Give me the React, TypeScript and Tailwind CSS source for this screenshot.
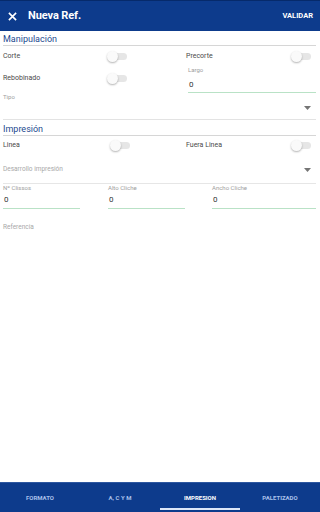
import React from "react";

function Toggle() {
  return (
    <div className="relative w-[20px] h-[12px] flex items-center">
      <div className="absolute right-0 w-[16px] h-[7px] rounded-full bg-[#e6e6e6]" />
      <div className="absolute left-0 w-[11px] h-[11px] rounded-full bg-[#fafafa] shadow-[0_1px_2px_rgba(0,0,0,0.3)]" />
    </div>
  );
}

function Arrow() {
  return (
    <svg width="7" height="4" viewBox="0 0 7 4">
      <path d="M0 0 L7 0 L3.5 4 Z" fill="#757575" />
    </svg>
  );
}

function Field({ label, w, v, u }: { label: string; w: string; v: string; u: string }) {
  return (
    <div className={`flex flex-col ${w}`}>
      <div className="text-[6px] leading-[8px] text-[#9e9e9e] h-[8px]">{label}</div>
      <div className={`text-[8px] leading-[10px] text-[#333] pl-[1px] ${v}`}>0</div>
      <div className={`h-px bg-[#b9e2c6] ${u}`} />
    </div>
  );
}

export default function App() {
  return (
    <div
      className="w-[320px] h-[512px] bg-white flex flex-col overflow-hidden"
      style={{ fontFamily: "Roboto, 'Liberation Sans', sans-serif" }}
    >
      {/* header */}
      <div className="h-[31px] bg-[#0d3b8c] border-t border-[#062a6b] flex items-center px-[7px] shrink-0">
        <svg width="9" height="9" viewBox="0 0 10 10" className="ml-[1px]">
          <path d="M1 1 L9 9 M9 1 L1 9" stroke="white" strokeWidth="1.8" />
        </svg>
        <span className="ml-[11px] text-white font-bold text-[11px] tracking-[-0.1px]">Nueva Ref.</span>
        <span className="ml-auto text-white font-bold text-[7.5px]">VALIDAR</span>
      </div>

      <div className="flex-1 flex flex-col px-[3px]">
        {/* Manipulación */}
        <div className="mt-[2px] text-[9px] leading-[12px] text-[#1d4a8f]">Manipulación</div>
        <div className="h-px bg-[#d6d6d6] mr-[1px]" />

        <div className="grid grid-cols-[183px_1fr]">
          <div className="h-[20px] flex items-center">
            <span className="text-[7px] text-[#4a4a4a] w-[104px]">Corte</span>
            <Toggle />
          </div>
          <div className="h-[20px] flex items-center">
            <span className="text-[7px] text-[#4a4a4a] w-[104px]">Precorte</span>
            <span className="ml-auto mr-[6px]"><Toggle /></span>
          </div>
          <div className="h-[24px] flex items-center">
            <span className="text-[7px] text-[#4a4a4a] w-[104px]">Rebobinado</span>
            <Toggle />
          </div>
          <div className="pl-[2px] mr-[1px]">
            <Field label="Largo" w="w-full" v="mt-[6px]" u="mt-[2px]" />
          </div>
        </div>

        {/* Tipo */}
        <div className="text-[6px] leading-[8px] text-[#9e9e9e]">Tipo</div>
        <div className="h-[12px] flex items-center justify-end pr-[6px] mt-[1px]">
          <Arrow />
        </div>
        <div className="h-px bg-[#e3e3e3] mt-[5px] mr-[1px]" />

        {/* Impresión */}
        <div className="mt-[3px] text-[9px] leading-[12px] text-[#1d4a8f]">Impresión</div>
        <div className="h-px bg-[#d6d6d6] mr-[1px]" />

        <div className="grid grid-cols-[183px_1fr]">
          <div className="h-[18px] flex items-center">
            <span className="text-[7px] text-[#4a4a4a] w-[107px]">Linea</span>
            <Toggle />
          </div>
          <div className="h-[18px] flex items-center">
            <span className="text-[7px] text-[#4a4a4a] w-[104px]">Fuera Linea</span>
            <span className="ml-auto mr-[6px]"><Toggle /></span>
          </div>
        </div>

        {/* Desarrollo impresión */}
        <div className="mt-[9px] h-[14px] flex items-center">
          <span className="text-[6.5px] text-[#a8a8a8]">Desarrollo impresión</span>
          <span className="ml-auto mr-[6px] flex"><Arrow /></span>
        </div>
        <div className="h-px bg-[#e6e6e6] mt-[6px] mr-[1px]" />

        <div className="flex">
          <Field label="Nº Clissos" w="w-[77px]" v="mt-[3px]" u="mt-[3px]" />
          <div className="w-[28px]" />
          <Field label="Alto Cliche" w="w-[77px]" v="mt-[3px]" u="mt-[3px]" />
          <div className="w-[27px]" />
          <div className="flex-1 mr-[1px]">
            <Field label="Ancho Cliche" w="w-full" v="mt-[3px]" u="mt-[3px]" />
          </div>
        </div>

        <div className="mt-[14px] text-[6.5px] leading-[9px] text-[#a8a8a8]">Referencia</div>
      </div>

      {/* bottom nav */}
      <div className="h-[30px] bg-[#0d3b8c] border-t border-[#2d57a0] grid grid-cols-4 shrink-0">
        <div className="flex items-center justify-center text-[6px] font-bold text-[#a9c0ea]">FORMATO</div>
        <div className="flex items-center justify-center text-[6px] font-bold text-[#a9c0ea]">A, C Y M</div>
        <div className="relative flex items-center justify-center text-[6px] font-bold text-white">
          IMPRESION
          <div className="absolute bottom-[2px] left-0 right-0 h-[2px] bg-[#dce6f7]" />
        </div>
        <div className="flex items-center justify-center text-[6px] font-bold text-[#a9c0ea]">PALETIZADO</div>
      </div>
    </div>
  );
}
